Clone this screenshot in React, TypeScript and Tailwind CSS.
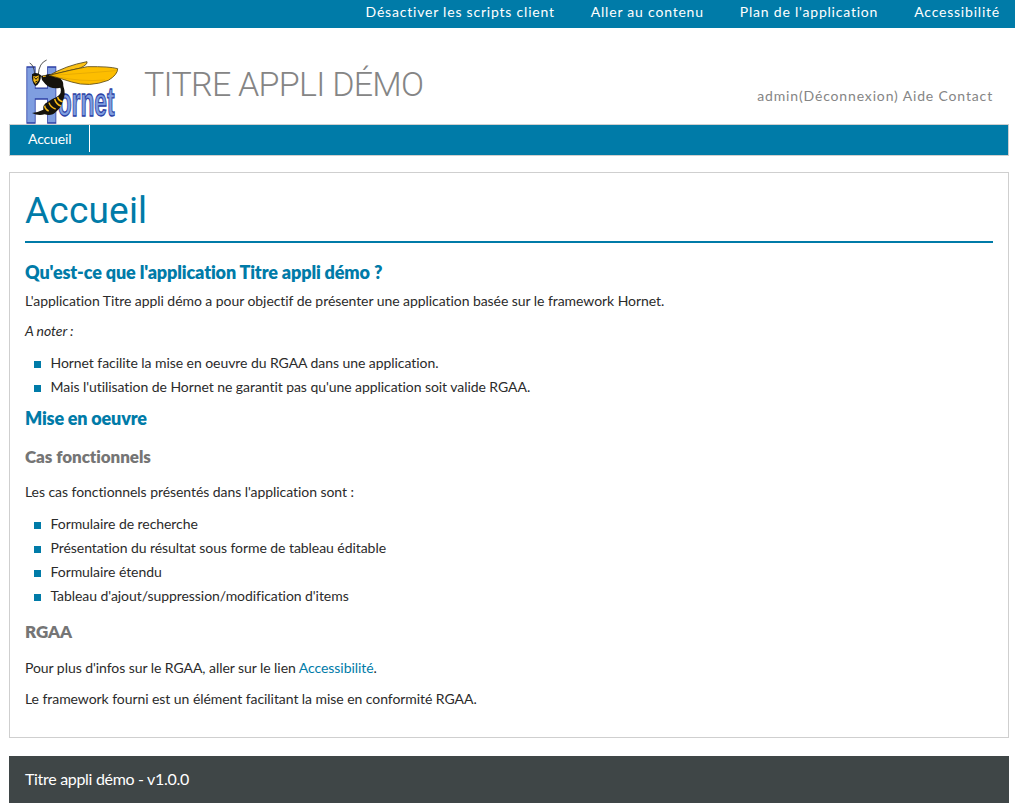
import type { ReactNode } from "react";

function HornetLogo() {
  return (
    <svg viewBox="0 0 306 207" width="102" height="69" className="block overflow-visible" role="img" aria-label="Hornet">
      <g fill="#7f9ee0" stroke="#2c3fa5" strokeWidth="4" fontWeight="700">
        <text transform="translate(8 204) scale(.58 1)" fontFamily="'DejaVu Sans', sans-serif" fontSize="230">H</text>
        <text transform="translate(113 184) scale(.56 1)" fontFamily="'Liberation Sans', sans-serif" fontSize="122">ornet</text>
      </g>
      <g fill="none" stroke="#333" strokeWidth="2.5">
        <path d="M44 57 Q42 30 29 24M55 58 Q57 24 80 15" />
      </g>
      <path d="M74 61 Q96 51 113 65 Q132 75 130 93 Q139 118 128 137 Q125 157 108 170 Q96 184 74 178 Q54 183 36 174 Q56 171 70 164 Q66 150 83 141 Q94 132 110 126 Q128 114 121 98 Q94 105 76 87 L66 75 L63 62Z" fill="#15130d" />
      <path d="M36 58 Q48 49 63 61 Q62 87 46 93 Q34 81 36 58Z" fill="#15130d" />
      <path d="M40 63 Q49 66 56 61 L56 76 L47 87 L40 78Z" fill="#f5ba16" />
      <path d="M43 67 L48 73 L53 67M46 81 L52 78" fill="none" stroke="#15130d" strokeWidth="3" />
      <path d="M113 126 Q115 137 128 140M104 132 Q108 148 123 153M87 143 Q91 157 107 162M74 152 Q75 163 86 168" fill="none" stroke="#f5ba16" strokeWidth="4.5" />
      <path d="M69 65 L78 63M99 62 L106 66" stroke="#f5ba16" strokeWidth="3" />
      <path d="M88 61 Q137 32 201 20 Q204 28 181 39Z" fill="#fbc114" stroke="#4f4015" strokeWidth="2.5" />
      <path d="M88 61 Q150 45 202 35 Q269 34 293 41 Q293 59 265 76 Q207 98 155 81 Q115 68 88 61Z" fill="#fdbe00" stroke="#5c4810" strokeWidth="2.5" />
      <path d="M100 61 Q180 56 287 47M110 65 Q182 81 255 75" fill="none" stroke="#d49b07" strokeWidth="1.5" />
    </svg>
  );
}

function BulletList({ items }: { items: string[] }) {
  return (
    <ul className="pl-[9px]">
      {items.map((item) => (
        <li key={item} className="flex h-6 items-center">
          <span className="mt-[5px] mr-[9.5px] size-[7px] bg-[#007ba8]" />
          {item}
        </li>
      ))}
    </ul>
  );
}

function Paragraph({ children }: { children: ReactNode }) {
  return <p className="h-6 leading-6">{children}</p>;
}

export default function App() {
  return (
    <div className="h-[810px] overflow-hidden bg-white font-['Lato',sans-serif] text-[14px] tracking-[-0.06px] text-[#2b2b2b]">
      <nav className="flex h-7 justify-end gap-9 bg-[#007ba8] pr-[15px] leading-[24px] tracking-[0.79px] text-white">
        <a>Désactiver les scripts client</a>
        <a>Aller au contenu</a>
        <a>Plan de l'application</a>
        <a>Accessibilité</a>
      </nav>
      <header className="flex h-24 items-end pr-[22px] pl-5">
        <HornetLogo />
        <div className="ml-[22px] h-[66px] font-['Roboto',sans-serif] text-[34px] leading-[53px] font-light tracking-[-0.72px] whitespace-nowrap text-[#858585]">
          TITRE APPLI DÉMO
        </div>
        <div className="ml-auto h-10 leading-6 tracking-[0.85px] whitespace-nowrap text-[#858585]">
          admin(Déconnexion) Aide Contact
        </div>
      </header>
      <nav className="mr-1.5 ml-[9px] h-8 border border-[#cfcfcf] bg-[#007ba8] text-white">
        <a className="block h-[27px] w-20 border-r border-white pl-[18px] leading-7 tracking-[-0.15px]">Accueil</a>
      </nav>
      <main className="mt-4 mr-1.5 ml-[9px] h-[566px] border border-[#cfcfcf] px-[15px]">
        <h1 className="h-[70px] border-b-2 border-[#007ba8] font-['Roboto',sans-serif] text-[37px] leading-[75px] font-normal tracking-[0.2px] text-[#007ba8]">
          Accueil
        </h1>
        <h2 className="mt-[17px] h-6 text-[18px] leading-6 font-extrabold tracking-[-0.14px] text-[#007ba8]">
          Qu'est-ce que l'application Titre appli démo ?
        </h2>
        <div className="mt-[5px]">
          <Paragraph>L'application Titre appli démo a pour objectif de présenter une application basée sur le framework Hornet.</Paragraph>
        </div>
        <div className="mt-1.5 italic"><Paragraph>A noter :</Paragraph></div>
        <div className="mt-[7px]">
          <BulletList items={["Hornet facilite la mise en oeuvre du RGAA dans une application.", "Mais l'utilisation de Hornet ne garantit pas qu'une application soit valide RGAA."]} />
        </div>
        <h2 className="mt-2 h-6 text-[18px] leading-6 font-extrabold tracking-[-0.2px] text-[#007ba8]">Mise en oeuvre</h2>
        <h3 className="mt-[15px] h-6 text-[17px] leading-6 font-extrabold text-[#757575]">Cas fonctionnels</h3>
        <div className="mt-[11px]"><Paragraph>Les cas fonctionnels présentés dans l'application sont :</Paragraph></div>
        <div className="mt-[7px]">
          <BulletList items={["Formulaire de recherche", "Présentation du résultat sous forme de tableau éditable", "Formulaire étendu", "Tableau d'ajout/suppression/modification d'items"]} />
        </div>
        <h3 className="mt-[13px] h-6 text-[17px] leading-6 font-extrabold text-[#757575]">RGAA</h3>
        <div className="mt-3">
          <Paragraph>Pour plus d'infos sur le RGAA, aller sur le lien <a className="text-[#007ba8]">Accessibilité</a>.</Paragraph>
        </div>
        <div className="mt-[7px]"><Paragraph>Le framework fourni est un élément facilitant la mise en conformité RGAA.</Paragraph></div>
      </main>
      <footer className="mt-[18px] mr-1.5 ml-[9px] h-[47px] bg-[#3f4647] pl-4 text-[16px] leading-[46px] tracking-[-0.31px] text-white">
        Titre appli démo - v1.0.0
      </footer>
    </div>
  );
}
